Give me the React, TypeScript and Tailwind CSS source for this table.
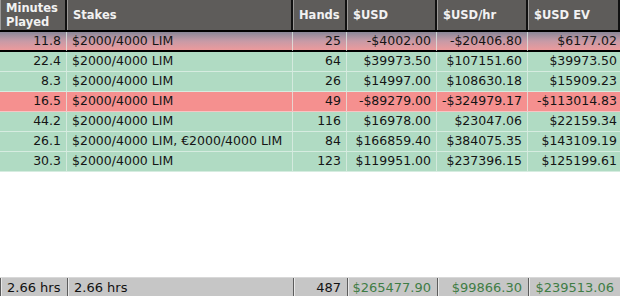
import React from 'react';

// --- Session rows -------------------------------------------------------------

interface SessionRow {
  minutes: string;
  stakes: string;
  hands: number;
  usd: string;
  usdHr: string;
  usdEv: string;
  tone: 'sel' | 'win' | 'loss';
}

const rows: SessionRow[] = [
  { minutes: '11.8', stakes: '$2000/4000 LIM', hands: 25, usd: '-$4002.00', usdHr: '-$20406.80', usdEv: '$6177.02', tone: 'sel' },
  { minutes: '22.4', stakes: '$2000/4000 LIM', hands: 64, usd: '$39973.50', usdHr: '$107151.60', usdEv: '$39973.50', tone: 'win' },
  { minutes: '8.3', stakes: '$2000/4000 LIM', hands: 26, usd: '$14997.00', usdHr: '$108630.18', usdEv: '$15909.23', tone: 'win' },
  { minutes: '16.5', stakes: '$2000/4000 LIM', hands: 49, usd: '-$89279.00', usdHr: '-$324979.17', usdEv: '-$113014.83', tone: 'loss' },
  { minutes: '44.2', stakes: '$2000/4000 LIM', hands: 116, usd: '$16978.00', usdHr: '$23047.06', usdEv: '$22159.34', tone: 'win' },
  { minutes: '26.1', stakes: '$2000/4000 LIM, €2000/4000 LIM', hands: 84, usd: '$166859.40', usdHr: '$384075.35', usdEv: '$143109.19', tone: 'win' },
  { minutes: '30.3', stakes: '$2000/4000 LIM', hands: 123, usd: '$119951.00', usdHr: '$237396.15', usdEv: '$125199.61', tone: 'win' },
];

const cols = 'grid grid-cols-[67px_226px_54px_90px_91px_92px]';

const toneClass: Record<SessionRow['tone'], string> = {
  sel: 'bg-gradient-to-b from-[#8a8798] via-[#c79aa6] to-[#ec9a9c] border-b-2 border-black',
  win: 'bg-[#b0dbc3] border-b border-[#d6ece0]',
  loss: 'bg-[#f5908f] border-b border-[#f8c4c4]',
};

function HeadCell({ children }: { children: React.ReactNode }) {
  return (
    <div className="flex items-center pl-[6px] pr-1 border-r-2 border-[#111] shadow-[inset_1px_0_0_#9a9896] leading-[14px]">
      {children}
    </div>
  );
}

function FootCell({ children, right, green }: { children: React.ReactNode; right?: boolean; green?: boolean }) {
  return (
    <div
      className={`flex items-center px-[6px] border-l border-[#5c5c5c] shadow-[inset_1px_0_0_#e8e8e8] ${right ? 'justify-end' : ''} ${green ? 'text-[#3f7d45]' : 'text-[#111]'}`}
    >
      {children}
    </div>
  );
}

export default function App() {
  return (
    <div className="w-[620px] h-[296px] bg-white flex flex-col font-['DejaVu_Sans',Verdana,sans-serif] text-[12.5px] text-[#151515] overflow-hidden">
      {/* Header */}
      <div className={`${cols} h-[32px] bg-[#5e5c5a] text-[#f2f2f2] font-bold text-[11.5px] border-b-2 border-black`}>
        <HeadCell>Minutes<br />Played</HeadCell>
        <HeadCell>Stakes</HeadCell>
        <HeadCell>Hands</HeadCell>
        <HeadCell>$USD</HeadCell>
        <HeadCell>$USD/hr</HeadCell>
        <HeadCell>$USD EV</HeadCell>
      </div>

      {/* Rows */}
      {rows.map((r, i) => (
        <div key={i} className={`${cols} h-[20px] ${toneClass[r.tone]}`}>
          <div className="flex items-center justify-end pr-[5px] border-r border-[#e4f1ea]/70">{r.minutes}</div>
          <div className="flex items-center pl-[5px] border-r border-[#e4f1ea]/70 whitespace-nowrap">{r.stakes}</div>
          <div className="flex items-center justify-end pr-[5px] border-r border-[#e4f1ea]/70">{r.hands}</div>
          <div className="flex items-center justify-end pr-[5px] border-r border-[#e4f1ea]/70">{r.usd}</div>
          <div className="flex items-center justify-end pr-[5px] border-r border-[#e4f1ea]/70">{r.usdHr}</div>
          <div className="flex items-center justify-end pr-[3px]">{r.usdEv}</div>
        </div>
      ))}

      <div className="flex-1" />

      {/* Totals */}
      <div className={`${cols} h-[19px] bg-[#c6c6c6] text-[13px] border-t border-[#d8d8d8]`}>
        <FootCell>2.66 hrs</FootCell>
        <FootCell>2.66 hrs</FootCell>
        <FootCell right>487</FootCell>
        <FootCell right green>$265477.90</FootCell>
        <FootCell right green>$99866.30</FootCell>
        <FootCell right green>$239513.06</FootCell>
      </div>
    </div>
  );
}
